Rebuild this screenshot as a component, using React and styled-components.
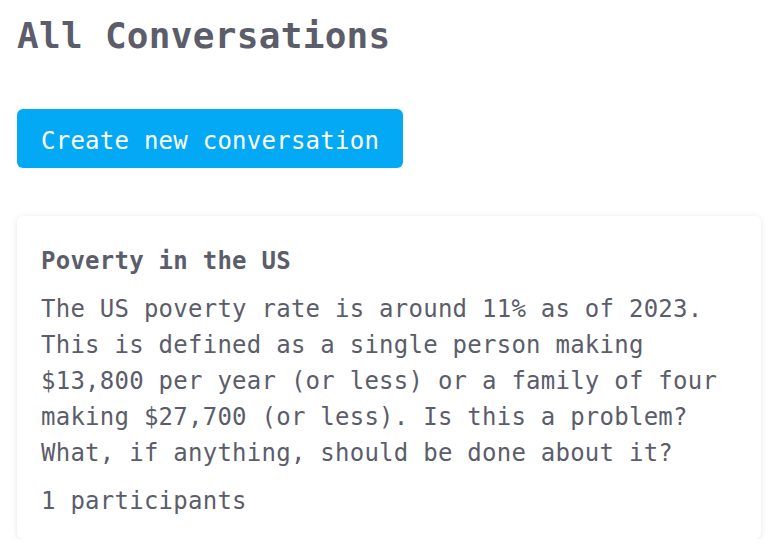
import styled, { createGlobalStyle } from "styled-components";

const GlobalStyle = createGlobalStyle`
  body {
    margin: 0;
    background: #fff;
    font-family: "DejaVu Sans Mono", "Liberation Mono", monospace;
    color: #5b5d6b;
  }
`;

const Page = styled.main`
  padding: 14px 23px 0 17px;
  display: flex;
  flex-direction: column;
  align-items: flex-start;
`;

const Title = styled.h1`
  margin: 0;
  font-size: 36px;
  line-height: 44px;
  font-weight: bold;
  letter-spacing: 0.3px;
  color: #5b5d6b;
`;

const CreateButton = styled.button`
  margin-top: 51px;
  padding: 15px 24px 9px;
  border: none;
  border-radius: 6px;
  background-color: #03a9f4;
  color: #fff;
  font-family: inherit;
  font-size: 24px;
  line-height: 35px;
  letter-spacing: 0.25px;
  cursor: pointer;
`;

const Card = styled.section`
  margin-top: 48px;
  align-self: stretch;
  background: #fff;
  border-radius: 6px;
  box-shadow: 0 1px 6px rgba(0, 0, 0, 0.1);
  padding: 27px 24px 20px;
  font-size: 24px;
  line-height: 36px;
  letter-spacing: 0.25px;
`;

const CardTitle = styled.h2`
  margin: 0;
  font-size: 24px;
  line-height: 36px;
  font-weight: bold;
`;

const Text = styled.p`
  margin: 12px 0 0;
`;

const App = () => {
  return (
    <>
      <GlobalStyle />
      <Page>
        <Title>All Conversations</Title>
        <CreateButton>Create new conversation</CreateButton>
        <Card>
          <CardTitle>Poverty in the US</CardTitle>
          <Text>
            The US poverty rate is around 11% as of 2023. This is defined as a
            single person making $13,800 per year (or less) or a family of four
            making $27,700 (or less). Is this a problem? What, if anything,
            should be done about it?
          </Text>
          <Text>1 participants</Text>
        </Card>
      </Page>
    </>
  );
};

export default App;
